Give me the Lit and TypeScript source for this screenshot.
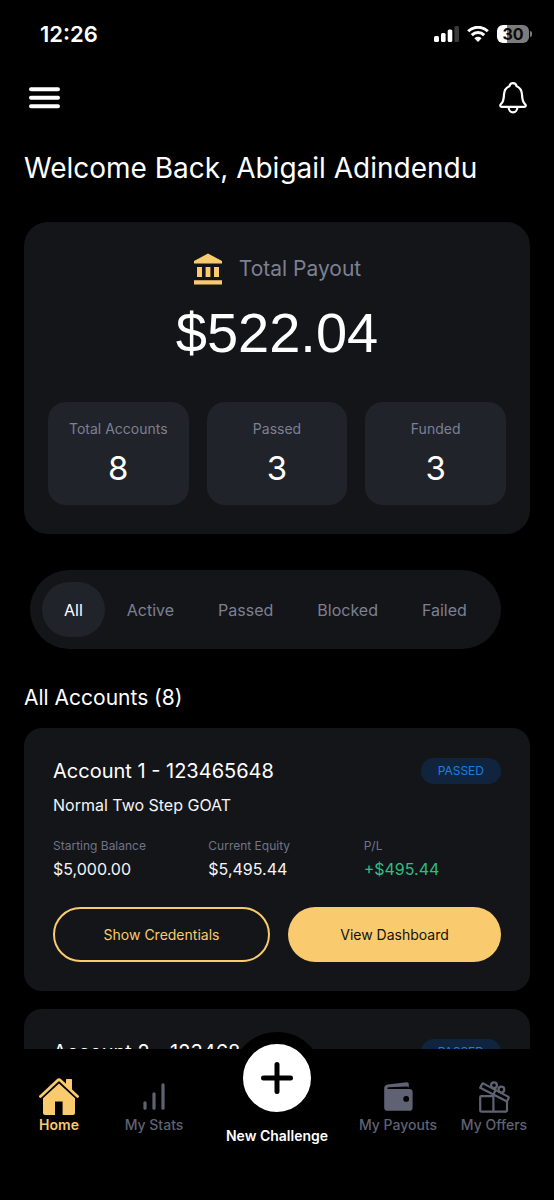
import { LitElement, html, css, svg, nothing } from "lit";
import { customElement, property, state } from "lit/decorators.js";
import { classMap } from "lit/directives/class-map.js";

interface Account {
  title: string;
  status: string;
  details?: { plan: string; balance: string; equity: string; pl: string };
}

const ACCOUNTS: Account[] = [
  {
    title: "Account 1 - 123465648",
    status: "PASSED",
    details: { plan: "Normal Two Step GOAT", balance: "$5,000.00", equity: "$5,495.44", pl: "+$495.44" },
  },
  { title: "Account 2 - 123468", status: "PASSED" },
];

const STATS = [
  { label: "Total Accounts", value: "8" },
  { label: "Passed", value: "3" },
  { label: "Funded", value: "3" },
];

const FILTERS = ["All", "Active", "Passed", "Blocked", "Failed"];

const homeIcon = html`<svg width="40" height="37" viewBox="0 0 40 37" aria-hidden="true">
  ${svg`<path d="M27 1.6Q27 1 27.6 1H32.4Q33 1 33 1.6V12.5L27 7.2Z" fill="currentColor"/>
  <path d="M1.4 18.4L18.8 2.2Q20 1.2 21.2 2.2L38.6 18.4" fill="none" stroke="currentColor" stroke-width="2.8" stroke-linecap="round" stroke-linejoin="round"/>
  <path d="M20 5.6L36 20.2V35Q36 37 34 37H23.6V23.6H16V37H6Q4 37 4 35V20.2Z" fill="currentColor"/>`}
</svg>`;

const statsIcon = html`<svg width="22" height="27" viewBox="0 0 22 27" aria-hidden="true">
  <path d="M2 19.8V25.2M11 10.8V25.2M20 1.8V25.2" fill="none" stroke="currentColor" stroke-width="3.2" stroke-linecap="round"/>
</svg>`;

const walletIcon = html`<svg width="29" height="29" viewBox="0 0 29 29" aria-hidden="true">
  <path fill="currentColor" fill-rule="evenodd" d="M0.2 6.4Q0.2 3.2 3.6 2.6L22.6 0.2Q24.8 0 24.8 2.2V5.6Q24.2 4.4 22 4.5L5 5.3Q2.6 5.6 3.8 7H25.4Q28.6 7 28.6 10.2V25.4Q28.6 28.8 25.2 28.8H3.6Q0.2 28.8 0.2 25.4ZM22.2 14A2.9 2.9 0 1 0 22.2 19.8A2.9 2.9 0 1 0 22.2 14Z"/>
</svg>`;

const giftIcon = html`<svg width="32" height="32" viewBox="0 0 32 32" aria-hidden="true">
  <g fill="none" stroke="currentColor" stroke-width="2.2" stroke-linejoin="round">
    <path d="M15.4 15.2H3.2Q2.2 15.2 2.2 16.2V29.6Q2.2 30.6 3.2 30.6H28Q29 30.6 29 29.6V21"/>
    <path d="M15.4 14.4V30.6"/>
    <path d="M5.6 2.6L30 15.6Q31 16.2 30.5 17.2L29 20.4L2.2 6.8L4 3.2Q4.6 2.2 5.6 2.6Z"/>
    <path d="M17.6 9L15.4 13.4"/>
    <circle cx="16" cy="4.2" r="2.9"/>
    <circle cx="23.4" cy="8.6" r="2.9"/>
  </g>
</svg>`;

@customElement("account-card")
class AccountCard extends LitElement {
  @property({ attribute: false }) account!: Account;

  static styles = css`
    :host { display: block; }
    .card { background: #141519; border-radius: 18px; padding: 29px; }
    .head { display: flex; justify-content: space-between; align-items: center; }
    h3 { margin: 0; font-size: 20px; line-height: 28px; font-weight: 400; color: #fff; }
    .badge { background: #10253d; color: #1c7ee0; border-radius: 13px; padding: 0 17px; font-size: 12px; line-height: 26px; }
    .plan { margin: 8px 0 0; font-size: 16px; line-height: 24px; color: #f4f4f6; }
    .figures { display: grid; grid-template-columns: repeat(3, 1fr); gap: 18px; margin: 20px 0 0; }
    dt { font-size: 12px; line-height: 18px; color: #707486; }
    dd { margin: 2px 0 0; font-size: 16px; line-height: 24px; color: #f4f4f6; }
    .gain { color: #2fbd83; }
    .actions { display: grid; grid-template-columns: 217fr 213fr; gap: 18px; margin-top: 26px; }
    button { height: 55px; border-radius: 28px; font: 400 14px "Inter", sans-serif; cursor: pointer; padding: 0; }
    .outline { background: transparent; border: 2px solid #f9cb6e; color: #f9cb6e; }
    .solid { background: #f9cb6e; border: 0; color: #14110a; }
  `;

  render() {
    const { title, status, details } = this.account;
    return html`<article class="card">
      <div class="head"><h3>${title}</h3><span class="badge">${status}</span></div>
      ${details
        ? html`<p class="plan">${details.plan}</p>
            <dl class="figures">
              <div><dt>Starting Balance</dt><dd>${details.balance}</dd></div>
              <div><dt>Current Equity</dt><dd>${details.equity}</dd></div>
              <div><dt>P/L</dt><dd class="gain">${details.pl}</dd></div>
            </dl>
            <div class="actions">
              <button class="outline">Show Credentials</button>
              <button class="solid">View Dashboard</button>
            </div>`
        : nothing}
    </article>`;
  }
}

@customElement("app-root")
class AppRoot extends LitElement {
  @state() private filter = "All";

  static styles = css`
    :host { display: flex; flex-direction: column; height: 100vh; overflow: hidden; background: #000; color: #fff; font-family: "Inter", sans-serif; }
    * { box-sizing: border-box; }
    svg { display: block; }
    button { font-family: inherit; border: 0; background: none; color: inherit; padding: 0; cursor: pointer; }
    .status { display: flex; justify-content: space-between; align-items: center; height: 68px; padding: 0 22px 0 40px; flex: none; }
    .time { font-size: 22px; line-height: 28px; font-weight: 600; }
    .indicators { display: flex; align-items: center; gap: 8px; }
    .battery { position: relative; width: 32px; height: 18px; border-radius: 6px; margin-right: 3px; background: linear-gradient(90deg, #fff 32%, #7c7c7c 32%); color: #0b0b0b; font-size: 16px; line-height: 18px; font-weight: 700; text-align: center; }
    .battery::after { content: ""; position: absolute; right: -3px; top: 6px; width: 2px; height: 6px; border-radius: 0 2px 2px 0; background: #7c7c7c; }
    .topbar { display: flex; justify-content: space-between; align-items: center; height: 58px; padding: 2px 27px 0 29px; flex: none; }
    .scroll { flex: 1; min-height: 0; overflow-y: auto; scrollbar-width: none; padding: 24px; }
    h1 { margin: 0; font-size: 28px; line-height: 36px; font-weight: 400; }
    .payout { margin-top: 36px; padding: 30px 24px 29px; border-radius: 24px; background: #141519; }
    .caption { display: flex; justify-content: center; align-items: center; gap: 16px; font-size: 21px; line-height: 34px; color: #7c8092; }
    .amount { margin: 11px 0 0; text-align: center; font-family: "Liberation Sans", Arial, sans-serif; font-size: 56px; line-height: 72px; font-weight: 400; }
    .tiles { display: grid; grid-template-columns: repeat(3, 1fr); gap: 18px; margin-top: 33px; }
    .tile { background: #20232a; border-radius: 18px; padding: 17px 4px; text-align: center; }
    .tile-label { font-size: 14px; line-height: 20px; color: #7c8092; }
    .tile-value { margin-top: 9px; font-size: 33px; line-height: 40px; }
    .filters { display: flex; width: fit-content; margin: 36px 0 0 6px; padding: 12px; border-radius: 40px; background: #141519; }
    .filter { height: 55px; padding: 0 22px; border-radius: 28px; font-size: 16px; color: #7c8092; }
    .filter.active { background: #20232a; color: #fff; }
    h2 { margin: 34px 0 15px; font-size: 21px; line-height: 30px; font-weight: 400; }
    .list { display: grid; gap: 18px; }
    .nav { flex: none; display: grid; grid-template-columns: 94fr 96fr 150fr 92fr 100fr; height: 151px; padding: 0 10px 0 12px; background: #000; position: relative; }
    .link { display: flex; flex-direction: column; align-items: center; padding-top: 29px; text-decoration: none; color: #5f6272; font-size: 14px; line-height: 18px; font-weight: 500; white-space: nowrap; }
    .icon { height: 37px; display: grid; place-items: center; margin-bottom: 1px; }
    .current { color: #f9cb6e; font-weight: 600; }
    .create { position: relative; color: #fff; font-weight: 600; padding-top: 78px; }
    .fab { position: absolute; left: 50%; top: -17px; transform: translateX(-50%); width: 92px; height: 92px; border-radius: 50%; background: #fff; border: 12px solid #000; display: grid; place-items: center; }
  `;

  render() {
    return html`
      <div class="status">
        <span class="time">12:26</span>
        <div class="indicators">
          <svg width="25" height="16" viewBox="0 0 25 16" aria-hidden="true">
            <rect x="0" y="10" width="5" height="6" rx="1.5" fill="#fff"/>
            <rect x="7" y="7" width="4.6" height="9" rx="1.5" fill="#fff"/>
            <rect x="13.7" y="3.6" width="4.6" height="12.4" rx="1.5" fill="#fff"/>
            <rect x="20.4" y="0" width="4.6" height="16" rx="1.5" fill="#3a3a3a"/>
          </svg>
          <svg width="22" height="16" viewBox="0 0 22 16" aria-hidden="true">
            <path d="M1.2 5.3A14 14 0 0 1 20.8 5.3M4.8 9.1A9 9 0 0 1 17.2 9.1" fill="none" stroke="#fff" stroke-width="3"/>
            <path d="M11 16L7.4 12.2A5.2 5.2 0 0 1 14.6 12.2Z" fill="#fff"/>
          </svg>
          <div class="battery">30</div>
        </div>
      </div>
      <header class="topbar">
        <button aria-label="Menu">
          <svg width="31" height="22" viewBox="0 0 31 22" aria-hidden="true">
            <path d="M2 2.3H29M2 10.8H29M2 19.3H29" stroke="#fff" stroke-width="4" stroke-linecap="round"/>
          </svg>
        </button>
        <button aria-label="Notifications">
          <svg width="28" height="32" viewBox="0 0 28 32" aria-hidden="true">
            <g fill="none" stroke="#fff" stroke-width="2.2" stroke-linejoin="round">
              <path d="M14 1.2C12 1.2 10.8 2.4 10.4 4.2C6.8 5.6 5.2 8.6 5 12.6C4.8 17.4 4.4 19.8 2.2 21.8C.6 23.2 1 24.9 2.8 24.9H25.2C27 24.9 27.4 23.2 25.8 21.8C23.6 19.8 23.2 17.4 23 12.6C22.8 8.6 21.2 5.6 17.6 4.2C17.2 2.4 16 1.2 14 1.2Z"/>
              <path d="M9.6 25A4.4 5.4 0 0 0 18.4 25"/>
            </g>
          </svg>
        </button>
      </header>
      <main class="scroll">
        <h1>Welcome Back, Abigail Adindendu</h1>
        <section class="payout">
          <div class="caption">
            <svg width="30" height="32" viewBox="0 0 30 32" aria-hidden="true">
              <path fill="#f9cb6e" d="M1 8L15 .5L29 8V10.5H1ZM4 14H9V24H4ZM12.6 14H17.4V24H12.6ZM21 14H26V24H21ZM1 27.2H29V31.5H1Z"/>
            </svg>
            <span>Total Payout</span>
          </div>
          <p class="amount">$522.04</p>
          <div class="tiles">
            ${STATS.map((s) => html`<div class="tile"><div class="tile-label">${s.label}</div><div class="tile-value">${s.value}</div></div>`)}
          </div>
        </section>
        <div class="filters">
          ${FILTERS.map((f) => html`<button class=${classMap({ filter: true, active: f === this.filter })} @click=${() => (this.filter = f)}>${f}</button>`)}
        </div>
        <h2>All Accounts (8)</h2>
        <div class="list">
          ${ACCOUNTS.map((a) => html`<account-card .account=${a}></account-card>`)}
        </div>
      </main>
      <nav class="nav">
        <a class="link current" href="#home"><span class="icon">${homeIcon}</span>Home</a>
        <a class="link" href="#stats"><span class="icon">${statsIcon}</span>My Stats</a>
        <a class="link create" href="#new">
          <span class="fab">
            <svg width="32" height="32" viewBox="0 0 32 32" aria-hidden="true">
              <path d="M16 2.5V29.5M2.5 16H29.5" stroke="#000" stroke-width="5" stroke-linecap="round"/>
            </svg>
          </span>New Challenge
        </a>
        <a class="link" href="#payouts"><span class="icon">${walletIcon}</span>My Payouts</a>
        <a class="link" href="#offers"><span class="icon">${giftIcon}</span>My Offers</a>
      </nav>
    `;
  }
}
